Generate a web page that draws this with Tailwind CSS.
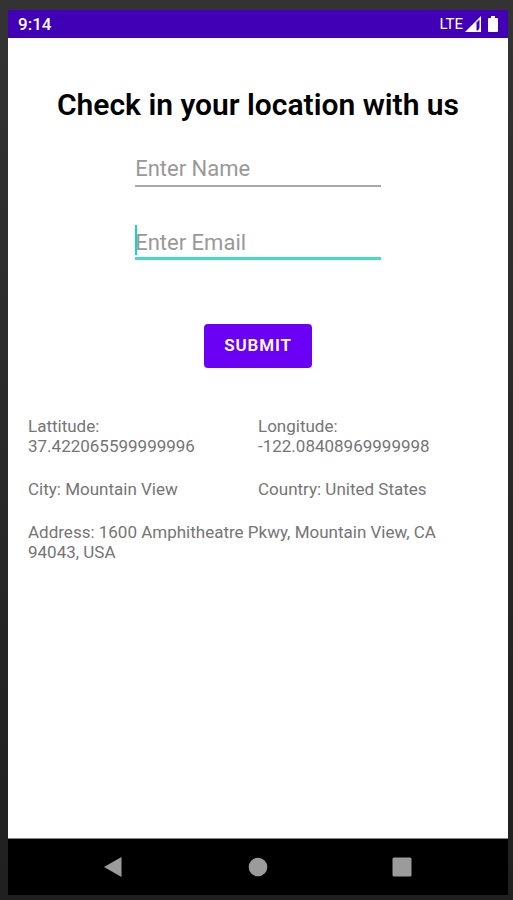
<!DOCTYPE html>
<html lang="en">
<head>
  <meta charset="UTF-8">
  <meta name="viewport" content="width=device-width, initial-scale=1.0">
  <title>Location Check In</title>
  <script src="https://cdn.jsdelivr.net/npm/@tailwindcss/browser@4"></script>
</head>
<body class="min-h-screen flex flex-col bg-linear-to-b from-[#333333] to-[#202020] pt-2.5 pb-[5px] pl-2 pr-[5px] font-['Roboto',sans-serif]">

<!-- Status bar -->
<header class="flex items-center justify-between h-7 bg-[#4100b5] pl-2.5 pr-[9px] text-white">
  <span class="pt-0.5 text-[17px] font-medium">9:14</span>
  <div class="flex items-center">
    <span class="text-[15px]">LTE</span>
    <svg class="ml-0.5 w-4 h-4" viewBox="0 0 16 16" fill="none">
      <path d="M0 16 L16 0 V16 Z" fill="white"/>
      <path d="M11.5 6.5 L14.5 3.5 V12 L13 14.5 H11.5 Z" fill="#4100b5"/>
    </svg>
    <svg class="ml-1.5 w-3 h-4" viewBox="0 0 12 16" fill="white">
      <path d="M4 0 H8 V2 H10 Q11 2 11 3 V15 Q11 16 10 16 H2 Q1 16 1 15 V3 Q1 2 2 2 H4 Z"/>
    </svg>
  </div>
</header>

<main class="flex-1 bg-white px-5 pt-[49px] border-b border-[#888888]">
  <h1 class="text-center text-3xl font-semibold text-black">Check in your location with us</h1>

  <form class="flex flex-col items-center">
    <div class="w-[53.4%] mt-6">
      <input
              type="text"
              name="name"
              aria-label="Name"
              placeholder="Enter Name"
              class="block w-full h-10 pt-1 text-[22px] text-black placeholder:text-[#999999] border-b-2 border-[#a8a8a8] outline-none"
      >
    </div>

    <div class="relative w-[53.4%] mt-8">
      <input
              type="email"
              name="email"
              aria-label="Email"
              placeholder="Enter Email"
              class="block w-full h-[41px] pt-2 text-[22px] text-black placeholder:text-[#999999] border-b-3 border-[#3fdcc8] outline-none"
      >
      <span class="absolute left-0 top-1.5 w-0.5 h-[30px] bg-[#0fd9c0]"></span>
    </div>

    <button
            type="button"
            class="mt-16 h-11 px-5 rounded-sm bg-[#6a00f4] text-white text-[17px] font-semibold tracking-wider"
    >
      SUBMIT
    </button>
  </form>

  <!-- Location details -->
  <section class="grid grid-cols-2 gap-y-[23px] mt-12 text-[17px] leading-5 text-[#757575]">
    <p>Lattitude:<br>37.422065599999996</p>
    <p>Longitude:<br>-122.08408969999998</p>
    <p>City: Mountain View</p>
    <p>Country: United States</p>
    <p class="col-span-2">Address: 1600 Amphitheatre Pkwy, Mountain View, CA 94043, USA</p>
  </section>
</main>

<!-- Navigation bar -->
<nav class="flex items-center justify-center gap-[124px] h-14 bg-black text-[#9b9b9b]">
  <button type="button" aria-label="Back">
    <svg class="w-5 h-5" viewBox="0 0 20 20" fill="currentColor">
      <path d="M0 10 L17.5 0 V20 Z"/>
    </svg>
  </button>
  <button type="button" aria-label="Home">
    <svg class="w-5 h-5" viewBox="0 0 20 20" fill="currentColor">
      <circle cx="10" cy="10" r="9.3"/>
    </svg>
  </button>
  <button type="button" aria-label="Recent apps">
    <svg class="w-5 h-5" viewBox="0 0 20 20" fill="currentColor">
      <rect x="0.5" y="0.5" width="19" height="19" rx="1.5"/>
    </svg>
  </button>
</nav>

</body>
</html>
